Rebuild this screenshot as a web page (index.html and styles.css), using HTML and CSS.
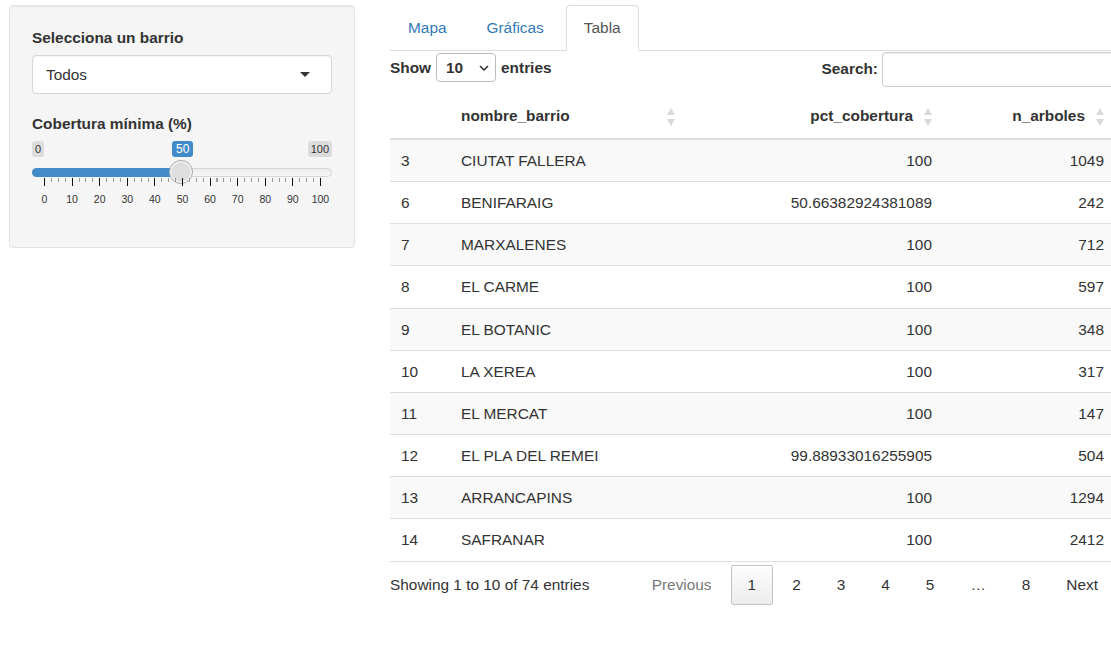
FILE: index.html
```html
<!DOCTYPE html>
<html lang="es">
<head>
<meta charset="utf-8">
<title>Arbolado de València</title>
<link rel="stylesheet" href="styles.css">
</head>
<body>
<aside class="sidebar">
  <div class="well">
    <div class="form-group">
      <label class="control-label">Selecciona un barrio</label>
      <div class="selectize">
        <span class="selectize-value">Todos</span>
        <span class="selectize-caret"></span>
      </div>
    </div>
    <div class="form-group">
      <label class="control-label">Cobertura mínima (%)</label>
      <div class="irs">
        <span class="irs-min">0</span>
        <span class="irs-max">100</span>
        <span class="irs-line"></span>
        <span class="irs-bar"></span>
        <span class="irs-single">50</span>
        <span class="irs-handle"></span>
        <span class="irs-grid">
          <span class="irs-grid-small"></span>
          <span class="irs-grid-big"></span>
          <span class="irs-grid-labels">
            <span>0</span><span>10</span><span>20</span><span>30</span><span>40</span><span>50</span><span>60</span><span>70</span><span>80</span><span>90</span><span>100</span>
          </span>
        </span>
      </div>
    </div>
  </div>
</aside>

<main class="main">
  <ul class="nav-tabs">
    <li><a>Mapa</a></li>
    <li><a>Gráficas</a></li>
    <li class="active"><a>Tabla</a></li>
  </ul>

  <div class="dt-top">
    <div class="dt-length">
      <span>Show</span>
      <span class="dt-select">10
        <svg width="10" height="6" viewBox="0 0 10 6"><path d="M1 1l4 4 4-4" fill="none" stroke="#333" stroke-width="1.5"/></svg>
      </span>
      <span>entries</span>
    </div>
    <div class="dt-filter">
      <span>Search:</span>
      <span class="dt-search"></span>
    </div>
  </div>

  <table class="dt">
    <colgroup>
      <col class="c-idx"><col class="c-name"><col class="c-pct"><col class="c-n">
    </colgroup>
    <thead>
      <tr>
        <th></th>
        <th class="sortable">nombre_barrio</th>
        <th class="sortable num">pct_cobertura</th>
        <th class="sortable num">n_arboles</th>
      </tr>
    </thead>
    <tbody>
      <tr><td>3</td><td>CIUTAT FALLERA</td><td class="num">100</td><td class="num">1049</td></tr>
      <tr><td>6</td><td>BENIFARAIG</td><td class="num">50.66382924381089</td><td class="num">242</td></tr>
      <tr><td>7</td><td>MARXALENES</td><td class="num">100</td><td class="num">712</td></tr>
      <tr><td>8</td><td>EL CARME</td><td class="num">100</td><td class="num">597</td></tr>
      <tr><td>9</td><td>EL BOTANIC</td><td class="num">100</td><td class="num">348</td></tr>
      <tr><td>10</td><td>LA XEREA</td><td class="num">100</td><td class="num">317</td></tr>
      <tr><td>11</td><td>EL MERCAT</td><td class="num">100</td><td class="num">147</td></tr>
      <tr><td>12</td><td>EL PLA DEL REMEI</td><td class="num">99.88933016255905</td><td class="num">504</td></tr>
      <tr><td>13</td><td>ARRANCAPINS</td><td class="num">100</td><td class="num">1294</td></tr>
      <tr><td>14</td><td>SAFRANAR</td><td class="num">100</td><td class="num">2412</td></tr>
    </tbody>
  </table>

  <div class="dt-bottom">
    <div class="dt-info">Showing 1 to 10 of 74 entries</div>
    <div class="dt-paging">
      <a class="pg disabled">Previous</a>
      <a class="pg current">1</a>
      <a class="pg">2</a>
      <a class="pg">3</a>
      <a class="pg">4</a>
      <a class="pg">5</a>
      <span class="pg ellipsis">…</span>
      <a class="pg">8</a>
      <a class="pg">Next</a>
    </div>
  </div>
</main>
</body>
</html>
```

FILE: styles.css
```css
html, body {
  overflow: hidden;
}

body {
  margin: 0;
  padding: 5px 0 0 9px;
  display: flex;
  align-items: flex-start;
  gap: 35px;
  font-family: "Liberation Sans", Arial, sans-serif;
  font-size: 15.4px;
  line-height: 22px;
  color: #333;
  background: #fff;
}

/* ---------- sidebar ---------- */

.sidebar {
  flex: 0 0 346px;
}

.well {
  background: #f5f5f5;
  border: 1px solid #e3e3e3;
  border-radius: 4px;
  box-shadow: inset 0 1px 1px rgba(0, 0, 0, 0.05);
  padding: 21px 22px;
}

.form-group {
  display: flex;
  flex-direction: column;
}

.form-group + .form-group {
  margin-top: 19px;
}

.control-label {
  font-weight: bold;
  line-height: 22px;
}

.selectize {
  margin-top: 6px;
  height: 39px;
  box-sizing: border-box;
  background: #fff;
  border: 1px solid #d6d6d6;
  border-radius: 4px;
  box-shadow: inset 0 1px 1px rgba(0, 0, 0, 0.04);
  display: flex;
  align-items: center;
  justify-content: space-between;
  padding: 0 21px 0 13px;
}

.selectize-caret {
  width: 0;
  height: 0;
  border-style: solid;
  border-width: 5.5px 5.5px 0 5.5px;
  border-color: #333 transparent transparent transparent;
}

/* range slider */

.irs {
  position: relative;
  height: 75px;
  margin-bottom: 16px;
}

.irs-min,
.irs-max,
.irs-single {
  position: absolute;
  top: 6px;
  font-size: 11px;
  line-height: 14px;
  padding: 1px 3px;
  border-radius: 3px;
  background: rgba(0, 0, 0, 0.1);
  color: #333;
}

.irs-min {
  left: 0;
}

.irs-max {
  right: 0;
}

.irs-single {
  left: 140px;
  padding: 1px 4px;
  font-size: 12px;
  background: #428bca;
  color: #fff;
}

.irs-line {
  position: absolute;
  left: 0;
  right: 0;
  top: 33px;
  height: 9px;
  box-sizing: border-box;
  border: 1px solid #d8d8d8;
  border-radius: 16px;
  background: linear-gradient(to bottom, #e4e4e4 -50%, #fff 150%);
}

.irs-bar {
  position: absolute;
  left: 0;
  width: 150px;
  top: 33px;
  height: 9px;
  border-radius: 16px 0 0 16px;
  background: #428bca;
}

.irs-handle {
  position: absolute;
  left: 137px;
  top: 25px;
  width: 24px;
  height: 24px;
  box-sizing: border-box;
  border-radius: 50%;
  border: 1px solid #ababab;
  background: #dedede;
  box-shadow: inset 0 0 1px 1px #fff;
}

.irs-grid {
  position: absolute;
  left: 12px;
  top: 43px;
  width: 277px;
  height: 30px;
}

.irs-grid-big,
.irs-grid-small {
  position: absolute;
  left: 0;
  top: 0;
  width: 277px;
}

.irs-grid-small {
  height: 4px;
  background: repeating-linear-gradient(90deg, #9a9a9a 0 1px, transparent 1px 6.9px);
}

.irs-grid-big {
  height: 8px;
  background: repeating-linear-gradient(90deg, #111 0 1px, transparent 1px 27.6px);
}

.irs-grid-labels {
  position: absolute;
  left: 0;
  width: 277px;
  top: 14px;
  display: flex;
  justify-content: space-between;
  font-size: 10.5px;
  line-height: 14px;
  color: #333;
}

.irs-grid-labels span {
  width: 1px;
  display: flex;
  justify-content: center;
}

/* ---------- main panel ---------- */

.main {
  flex: 0 0 725px;
}

.nav-tabs {
  list-style: none;
  margin: 0;
  padding: 0;
  display: flex;
  border-bottom: 1px solid #ddd;
}

.nav-tabs li {
  margin-bottom: -1px;
  margin-right: 4px;
}

.nav-tabs a {
  display: block;
  padding: 11px 17px 11px 17px;
  line-height: 22px;
  border: 1px solid transparent;
  border-radius: 4px 4px 0 0;
  color: #337ab7;
}

.nav-tabs .active a {
  color: #555;
  background: #fff;
  border-color: #ddd #ddd transparent;
}

.dt-top {
  display: flex;
  justify-content: space-between;
  align-items: flex-start;
  font-weight: bold;
}

.dt-length {
  display: flex;
  align-items: center;
  gap: 5px;
  height: 31px;
  padding-top: 1px;
}

.dt-select {
  width: 60px;
  height: 29px;
  box-sizing: border-box;
  border: 1px solid #bbb;
  border-radius: 4px;
  background: #fff;
  display: flex;
  align-items: center;
  justify-content: space-between;
  padding: 0 6px 0 9px;
  font-weight: bold;
}

.dt-filter {
  display: flex;
  align-items: center;
  gap: 4px;
  height: 36px;
}

.dt-search {
  width: 233px;
  height: 35px;
  box-sizing: border-box;
  border: 1px solid #ccc;
  border-radius: 4px;
  background: #fff;
  box-shadow: inset 0 1px 1px rgba(0, 0, 0, 0.075);
}

/* table */

.dt {
  width: 725px;
  margin-top: 10px;
  table-layout: fixed;
  border-collapse: separate;
  border-spacing: 0;
}

.c-idx { width: 60px; }
.c-name { width: 236px; }
.c-pct { width: 257px; }
.c-n { width: 172px; }

.dt th {
  position: relative;
  text-align: left;
  font-weight: bold;
  padding: 8px 30px 11px 11px;
  line-height: 22px;
  border-bottom: 2px solid #ddd;
}

.dt td {
  padding: 10px 11px;
  line-height: 21.15px;
  border-bottom: 1px solid #ddd;
  white-space: nowrap;
}

.dt .num {
  text-align: right;
}

.dt tbody tr:nth-child(odd) td {
  background: #f9f9f9;
}

/* double sort arrows */
.sortable::before,
.sortable::after {
  content: "";
  position: absolute;
  right: 11px;
  width: 0;
  height: 0;
  border-left: 4.5px solid transparent;
  border-right: 4.5px solid transparent;
}

.sortable::before {
  top: 11px;
  border-bottom: 7px solid #d9d9d9;
}

.sortable::after {
  top: 22px;
  border-top: 7px solid #d9d9d9;
}

.dt-bottom {
  margin-top: 3px;
  display: flex;
  align-items: center;
  justify-content: space-between;
  height: 40px;
}

.dt-paging {
  display: flex;
  align-items: center;
  gap: 2px;
}

.pg {
  box-sizing: border-box;
  height: 40px;
  display: flex;
  align-items: center;
  padding: 0 16px;
  border: 1px solid transparent;
  border-radius: 2px;
  color: #333;
}

.pg.disabled {
  color: #777;
}

.pg.current {
  border-color: #c4c4c4;
  background: linear-gradient(to bottom, #fefefe 0%, #ececec 100%);
}
```
